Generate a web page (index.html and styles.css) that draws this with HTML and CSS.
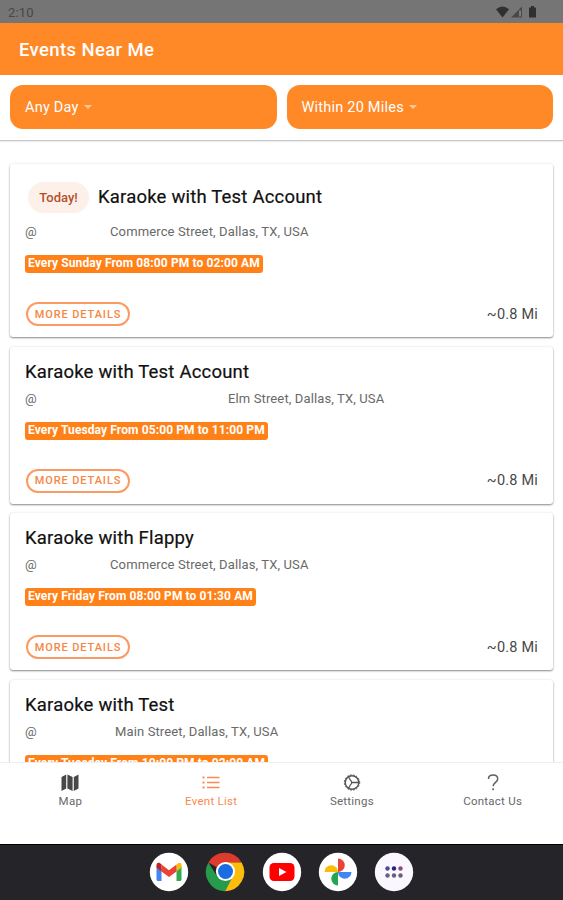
FILE: index.html
```html
<!DOCTYPE html>
<html lang="en">
<head>
  <meta charset="UTF-8">
  <meta name="viewport" content="width=device-width, initial-scale=1.0">
  <title>Events Near Me</title>
  <link rel="stylesheet" href="styles.css">
</head>
<body>
  <div class="status-bar">
    <span>2:10</span>
    <svg width="42" height="14" viewBox="0 0 42 14" fill="#303030">
      <path d="M0 4.2Q6.5-1 13 4.2L6.5 12.5Z"/>
      <path d="M15 12.5 26 1.5v11Z" fill="#484848"/>
      <path d="M23.2 5.5h1.6v6h-1.6z" fill="#888"/>
      <path d="M33 2.5h2V1h3v1.5h2v10h-7z"/>
    </svg>
  </div>

  <header class="header">
    <h1>Events Near Me</h1>
  </header>

  <div class="filters">
    <button class="filter">Any Day <span class="caret"></span></button>
    <button class="filter">Within 20 Miles <span class="caret"></span></button>
  </div>

  <main class="events">
    <div class="card">
      <div class="card-title featured"><span class="today">Today!</span><h2>Karaoke with Test Account</h2></div>
      <p class="address"><span class="at venue-short">@</span>Commerce Street, Dallas, TX, USA</p>
      <div class="time">Every Sunday From 08:00 PM to 02:00 AM</div>
      <div class="card-footer"><button class="details">MORE DETAILS</button><span class="distance">~0.8 Mi</span></div>
    </div>

    <div class="card">
      <div class="card-title"><h2>Karaoke with Test Account</h2></div>
      <p class="address"><span class="at venue-long">@</span>Elm Street, Dallas, TX, USA</p>
      <div class="time">Every Tuesday From 05:00 PM to 11:00 PM</div>
      <div class="card-footer"><button class="details">MORE DETAILS</button><span class="distance">~0.8 Mi</span></div>
    </div>

    <div class="card">
      <div class="card-title"><h2>Karaoke with Flappy</h2></div>
      <p class="address"><span class="at venue-short">@</span>Commerce Street, Dallas, TX, USA</p>
      <div class="time">Every Friday From 08:00 PM to 01:30 AM</div>
      <div class="card-footer"><button class="details">MORE DETAILS</button><span class="distance">~0.8 Mi</span></div>
    </div>

    <div class="card">
      <div class="card-title"><h2>Karaoke with Test</h2></div>
      <p class="address"><span class="at venue-medium">@</span>Main Street, Dallas, TX, USA</p>
      <div class="time">Every Tuesday From 10:00 PM to 02:00 AM</div>
    </div>
  </main>

  <nav class="tabs">
    <a class="tab">
      <svg width="20" height="20" viewBox="0 0 20 20" fill="#484848">
        <path d="M1.5 4 6.200 1.500v14L1.500 18zM7.400 1.500l5.200 2.500v14l-5.200-2.500zM13.800 4 18.500 1.500v14L13.800 18z"/>
      </svg>
      <span>Map</span>
    </a>
    <a class="tab active">
      <svg width="20" height="20" viewBox="0 0 20 20" fill="none" stroke="#fb8a52" stroke-width="1.3">
        <path d="M6 4.5h12.500M6 9.500h12.500M6 14.500h12.500"/>
        <path d="M1.500 4.500h2M1.500 9.500h2M1.500 14.500h2" stroke-width="2"/>
      </svg>
      <span>Event List</span>
    </a>
    <a class="tab">
      <svg width="20" height="20" viewBox="0 0 20 20" fill="none" stroke="#555">
        <circle cx="10" cy="9.5" r="6.800" stroke-width="1.500"/>
        <circle cx="10" cy="9.5" r="7.700" stroke-width="1" stroke-dasharray="1.500 1.600"/>
        <path d="M8.500 7.200a2.800 2.800 0 0 1 0 4.600M10 9.500h7M8.500 7.200 6.500 3.700M8.500 11.800 6.500 15.300" stroke-width="1.300"/>
      </svg>
      <span>Settings</span>
    </a>
    <a class="tab">
      <svg width="20" height="20" viewBox="0 0 20 20" fill="none" stroke="#606060" stroke-width="1.5">
        <path d="M5.500 6C5.500.8 14.700.8 14.700 6c0 3.300-4.600 3.400-4.600 7.300"/>
        <circle cx="10.100" cy="16.200" r="1" fill="#606060" stroke="none"/>
      </svg>
      <span>Contact Us</span>
    </a>
  </nav>

  <div class="dock">
    <svg width="40" height="40" viewBox="0 0 40 40">
      <circle cx="20" cy="20" r="19.2" fill="#fff"/>
      <path d="M7.500 14v13.500q0 1.500 1.500 1.500h3.500V17z" fill="#4285f4"/>
      <path d="M27.500 17v12H31q1.500 0 1.500-1.500V14z" fill="#34a853"/>
      <path d="M27.500 13v6.500l5-4V13c0-3-3-3.300-5 0z" fill="#fbbc04"/>
      <path d="M12.500 12.500 20 18.200l7.500-5.700v7L20 25l-7.500-5.500z" fill="#ea4335"/>
      <path d="M7.500 13v2.500l5 4v-7c-2-2.500-5-2-5 .5z" fill="#c5221f"/>
    </svg>
    <svg width="40" height="40" viewBox="0 0 40 40">
      <path d="M20 20 3.370 10.400A19.200 19.200 0 0 1 36.630 10.400L20 11z" fill="#dc3b2d"/>
      <path d="M3.370 10.400A19.200 19.200 0 0 0 20 39.200L28 24.500 20 20 12.200 24.500z" fill="#269b4c"/>
      <path d="M20 39.200A19.200 19.200 0 0 0 36.630 10.400H20L27.800 24.500z" fill="#fdbd0c"/>
      <circle cx="20.500" cy="19.500" r="9.600" fill="#fff"/>
      <circle cx="20.500" cy="19.500" r="7.500" fill="#1a6de0"/>
    </svg>
    <svg width="40" height="40" viewBox="0 0 40 40">
      <circle cx="20" cy="20" r="19.2" fill="#fff"/>
      <rect x="7.500" y="11" width="25" height="18" rx="4.500" fill="#f00"/>
      <path d="m17 16 7.500 4-7.500 4z" fill="#fff"/>
    </svg>
    <svg width="40" height="40" viewBox="0 0 40 40">
      <circle cx="20" cy="20" r="19.2" fill="#fff"/>
      <path d="M20 20V6.500a6.700 6.700 0 0 1 0 13.500z" fill="#ea4335"/>
      <path d="M20 20h13.500a6.700 6.700 0 0 1-13.500 0z" fill="#4285f4"/>
      <path d="M20 20v13.500a6.700 6.700 0 0 1 0-13.500z" fill="#24a552"/>
      <path d="M20 20H6.500a6.700 6.700 0 0 1 13.500 0z" fill="#fbbc04"/>
    </svg>
    <svg width="40" height="40" viewBox="0 0 40 40">
      <circle cx="20" cy="20" r="19.2" fill="#faf7ff"/>
      <circle cx="13.500" cy="16.500" r="2.200" fill="#4c4b91"/>
      <circle cx="20" cy="16.500" r="2.200" fill="#29247e"/>
      <circle cx="26.500" cy="16.500" r="2.200" fill="#87506f"/>
      <circle cx="13.500" cy="23.500" r="2.200" fill="#65617c"/>
      <circle cx="20" cy="23.500" r="2.200" fill="#65617c"/>
      <circle cx="26.500" cy="23.500" r="2.200" fill="#65617c"/>
    </svg>
  </div>
</body>
</html>
```

FILE: styles.css
```css
* {
  box-sizing: border-box;
}
body {
  display: flex;
  flex-direction: column;
  height: 900px;
  margin: 0;
  overflow: hidden;
  background: #fff;
  font-family: Roboto, "Liberation Sans", sans-serif;
}
h1, h2, p {
  margin: 0;
}
button {
  font-family: inherit;
}
.status-bar {
  display: flex;
  flex: none;
  justify-content: space-between;
  align-items: center;
  height: 23px;
  padding: 1px 25px 0 8px;
  background: #757575;
  color: #484848;
  font-size: 13px;
  letter-spacing: 0.2px;
}
.header {
  display: flex;
  flex: none;
  align-items: center;
  height: 52px;
  padding: 1px 0 0 19px;
  background: #ff8827;
}
.header h1 {
  color: #fff;
  font-size: 18.5px;
  font-weight: 500;
  letter-spacing: 0.38px;
}
.filters {
  display: flex;
  flex: none;
  gap: 10px;
  height: 66px;
  padding: 10px 10px 11px;
  border-bottom: 1px solid #c8c8c8;
  box-shadow: 0 1px 1px #eee;
}
.filter {
  display: flex;
  flex: 1;
  align-items: center;
  gap: 5px;
  padding: 0 15px;
  border: none;
  border-radius: 13px;
  background: #ff8827;
  color: #fff;
  font-size: 14.5px;
  letter-spacing: 0.22px;
}
.caret {
  border: 4px solid transparent;
  border-top-color: #ffc795;
  border-bottom: 0;
}
.events {
  display: flex;
  flex: 1;
  flex-direction: column;
  gap: 9.5px;
  min-height: 0;
  padding: 23px 10px 0;
  overflow: hidden;
}
.card {
  flex: none;
  padding: 13px 15px 11px;
  border-radius: 3px;
  background: #fff;
  box-shadow: 0 1px 2px rgba(0, 0, 0, 0.45), 0 0 3px rgba(0, 0, 0, 0.06);
}
.card-title {
  display: flex;
  align-items: center;
  height: 24px;
}
.card-title.featured {
  gap: 9px;
  height: 40px;
  padding-left: 3px;
}
.card-title h2 {
  color: #111;
  font-size: 18.5px;
  font-weight: 400;
  letter-spacing: 0.2px;
  -webkit-text-stroke: 0.2px #111;
}
.today {
  width: 61px;
  height: 31px;
  border-radius: 16px;
  background: #fcf0e9;
  color: #b2502b;
  font-size: 13px;
  font-weight: 500;
  line-height: 31px;
  text-align: center;
}
.address {
  display: flex;
  height: 30px;
  color: #696969;
  font-size: 13px;
  line-height: 30px;
  letter-spacing: 0.13px;
}
.at {
  flex: none;
}
.venue-short {
  width: 85px;
}
.venue-medium {
  width: 90px;
}
.venue-long {
  width: 203px;
}
.time {
  width: fit-content;
  height: 18px;
  margin-top: 8px;
  padding: 0 3px;
  border-radius: 3px;
  background: #ff8118;
  color: #fff;
  font-size: 12px;
  font-weight: 700;
  line-height: 17px;
  letter-spacing: 0.11px;
  white-space: nowrap;
}
.card-footer {
  display: flex;
  justify-content: space-between;
  align-items: center;
  height: 24px;
  margin-top: 29px;
}
.details {
  width: 104px;
  height: 24px;
  margin-left: 1px;
  padding: 0;
  border: 2px solid #fb9a62;
  border-radius: 12px;
  background: #fff;
  color: #f58743;
  font-size: 11px;
  font-weight: 500;
  letter-spacing: 0.9px;
}
.distance {
  color: #484848;
  font-size: 14.5px;
  letter-spacing: 0.2px;
}
.tabs {
  display: flex;
  flex: none;
  height: 82px;
  padding-top: 10px;
  border-top: 1px solid #eee;
  background: #fff;
}
.tab {
  display: flex;
  flex: 1;
  flex-direction: column;
  align-items: center;
  color: #686868;
  font-size: 11.5px;
  line-height: 16px;
  letter-spacing: 0.25px;
}
.tab.active {
  color: #fb8a52;
}
.dock {
  display: flex;
  flex: none;
  justify-content: center;
  gap: 16.3px;
  height: 56px;
  padding-top: 7px;
  border-top: 1px solid #000;
  background: #252529;
}
```
